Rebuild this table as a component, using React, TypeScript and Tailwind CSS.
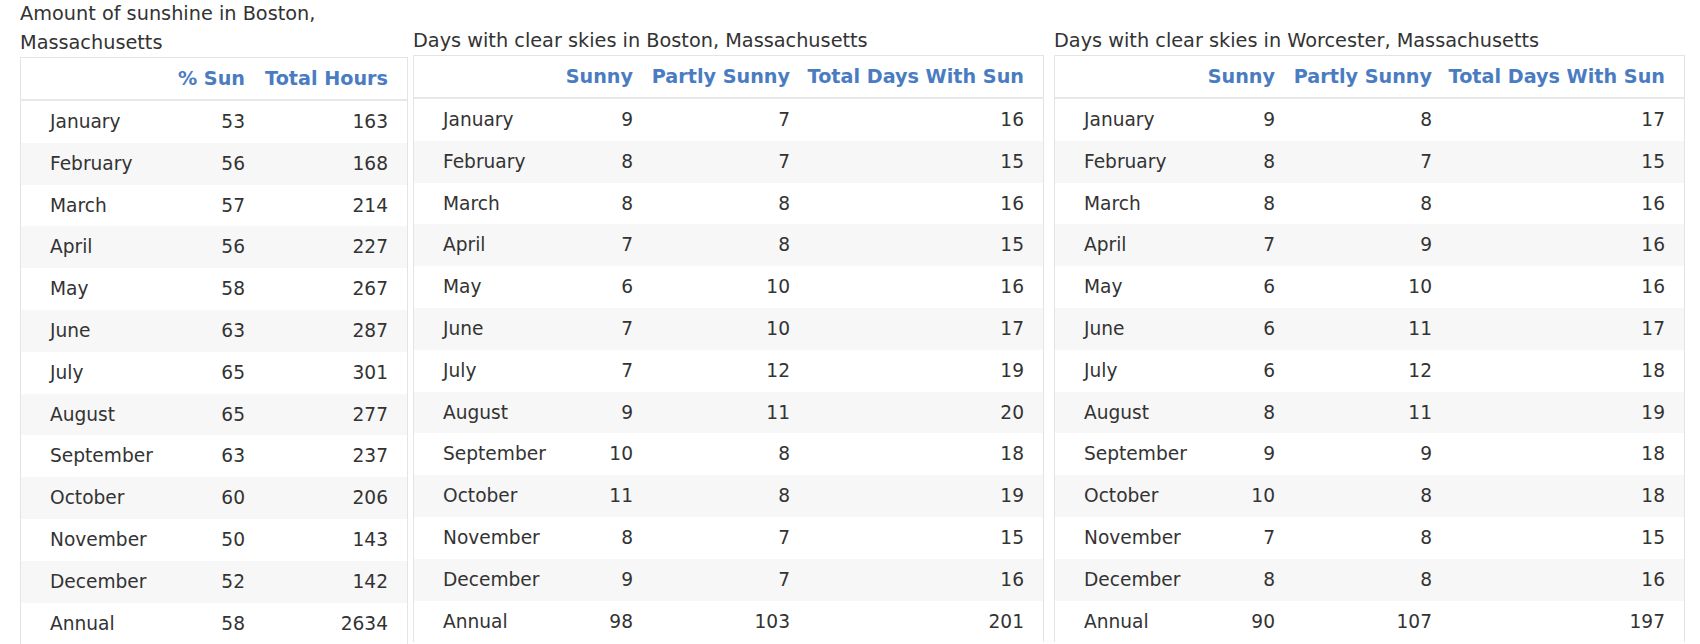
import React from 'react';

type Row = [string, number, number, number?];

interface SunTableProps {
  title: string[];
  headers: string[];
  rows: Row[];
  cols: string;
  width: string;
  titleClass: string;
}

const BOSTON_SUN: Row[] = [
  ['January', 53, 163],
  ['February', 56, 168],
  ['March', 57, 214],
  ['April', 56, 227],
  ['May', 58, 267],
  ['June', 63, 287],
  ['July', 65, 301],
  ['August', 65, 277],
  ['September', 63, 237],
  ['October', 60, 206],
  ['November', 50, 143],
  ['December', 52, 142],
  ['Annual', 58, 2634],
];

const BOSTON_CLEAR: Row[] = [
  ['January', 9, 7, 16],
  ['February', 8, 7, 15],
  ['March', 8, 8, 16],
  ['April', 7, 8, 15],
  ['May', 6, 10, 16],
  ['June', 7, 10, 17],
  ['July', 7, 12, 19],
  ['August', 9, 11, 20],
  ['September', 10, 8, 18],
  ['October', 11, 8, 19],
  ['November', 8, 7, 15],
  ['December', 9, 7, 16],
  ['Annual', 98, 103, 201],
];

const WORCESTER_CLEAR: Row[] = [
  ['January', 9, 8, 17],
  ['February', 8, 7, 15],
  ['March', 8, 8, 16],
  ['April', 7, 9, 16],
  ['May', 6, 10, 16],
  ['June', 6, 11, 17],
  ['July', 6, 12, 18],
  ['August', 8, 11, 19],
  ['September', 9, 9, 18],
  ['October', 10, 8, 18],
  ['November', 7, 8, 15],
  ['December', 8, 8, 16],
  ['Annual', 90, 107, 197],
];

const SunTable = ({ title, headers, rows, cols, width, titleClass }: SunTableProps): React.JSX.Element => {
  return (
    <div className={`flex flex-col ${width}`}>
      <div className={`text-[19.3px] leading-[29px] whitespace-nowrap text-[#333] ${titleClass}`}>
        {title.map((line) => (
          <div key={line}>{line}</div>
        ))}
      </div>
      <div className="border border-[#e4e4e4] border-b-0">
        <div className={`grid ${cols} h-[43px] items-center border-b-2 border-[#e8e8e8] pl-[29px] pr-[19px] pt-[2px] text-[19.2px] font-bold text-[#4a7cc2]`}>
          <div />
          {headers.map((h) => (
            <div key={h} className="text-right whitespace-nowrap">{h}</div>
          ))}
        </div>
        {rows.map((row, idx) => (
          <div
            key={row[0]}
            className={`grid ${cols} h-[41.8px] items-center pl-[29px] pr-[19px] text-[18.6px] text-[#333] ${idx % 2 === 1 ? 'bg-[#f7f7f7]' : 'bg-white'}`}
          >
            <div>{row[0]}</div>
            {row.slice(1).map((v, i) => (
              <div key={i} className="text-right">{v}</div>
            ))}
          </div>
        ))}
      </div>
    </div>
  );
};

const App = (): React.JSX.Element => {
  return (
    <div className="h-[644px] w-[1700px] overflow-hidden bg-white pl-[20px] font-['DejaVu_Sans',sans-serif]">
      <div className="flex items-start">
        <SunTable
          title={['Amount of sunshine in Boston,', 'Massachusetts']}
          headers={['% Sun', 'Total Hours']}
          rows={BOSTON_SUN}
          cols="grid-cols-[120px_75px_1fr]"
          width="w-[388px]"
          titleClass="-mt-[1px]"
        />
        <div className="ml-[5px]">
          <SunTable
            title={['Days with clear skies in Boston, Massachusetts']}
            headers={['Sunny', 'Partly Sunny', 'Total Days With Sun']}
            rows={BOSTON_CLEAR}
            cols="grid-cols-[117px_73px_157px_1fr]"
            width="w-[631px]"
            titleClass="pt-[26px]"
          />
        </div>
        <div className="ml-[10px]">
          <SunTable
            title={['Days with clear skies in Worcester, Massachusetts']}
            headers={['Sunny', 'Partly Sunny', 'Total Days With Sun']}
            rows={WORCESTER_CLEAR}
            cols="grid-cols-[118px_73px_157px_1fr]"
            width="w-[631px]"
            titleClass="pt-[26px]"
          />
        </div>
      </div>
    </div>
  );
};

export default App;
